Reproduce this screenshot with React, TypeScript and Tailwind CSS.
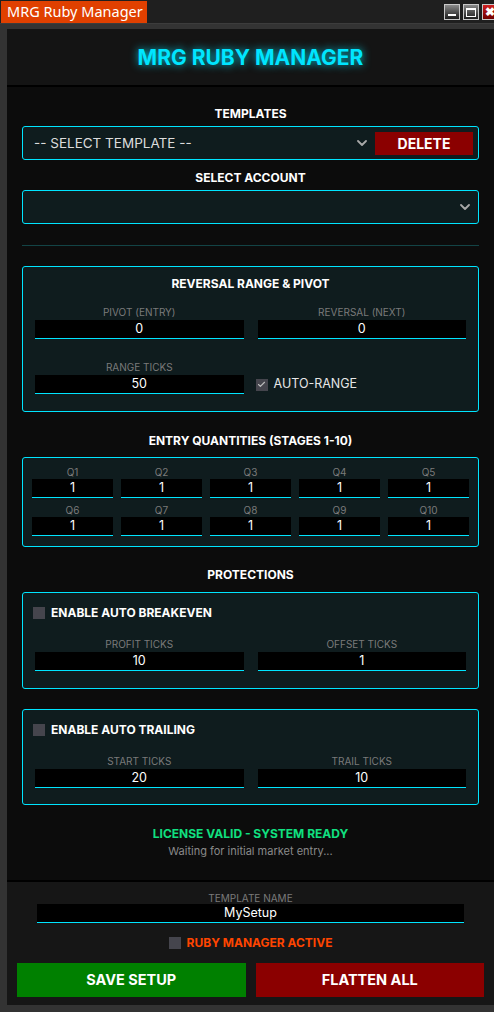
import { Check } from "lucide-react"

const Chevron = () => (
  <svg width="10" height="6" viewBox="0 0 10 6" className="shrink-0">
    <polyline points="1,1 5,5 9,1" fill="none" stroke="#a8a8a8" strokeWidth="1.8" strokeLinecap="round" strokeLinejoin="round" />
  </svg>
)

const Field = ({ label, value }: { label: string; value: string }) => (
  <div className="flex flex-col">
    <div className="h-[12px] leading-[12px] text-[10px] text-[#7a7a7a] text-center">{label}</div>
    <div className="mt-[2px] h-[19px] bg-black border-b border-[#00e5ff] text-white text-[12.5px] leading-[18px] text-center">{value}</div>
  </div>
)

const QField = ({ label }: { label: string }) => (
  <div className="flex flex-col">
    <div className="h-[12px] leading-[12px] text-[10px] text-[#7a7a7a] text-center">{label}</div>
    <div className="mt-[1px] h-[19px] bg-black border-b border-[#00e5ff] text-white text-[12.5px] leading-[18px] text-center">1</div>
  </div>
)

const Box = ({ checked }: { checked?: boolean }) => (
  <div className="w-[12px] h-[12px] bg-[#45454d] flex items-center justify-center shrink-0">
    {checked && <Check size={9} strokeWidth={3} color="#bdbdbd" />}
  </div>
)

const SectionTitle = ({ children }: { children: string }) => (
  <div className="h-[14px] leading-[15px] text-[12px] font-bold text-white text-center">{children}</div>
)

const Panel = ({ children, className }: { children: React.ReactNode; className?: string }) => (
  <div className={"border border-[#00e5ff] rounded-[3px] bg-[#0f1c1e] " + (className ?? "")}>{children}</div>
)

const App = () => {
  return (
    <div className="w-[494px] h-[1012px] bg-[#202020] overflow-hidden flex flex-col font-['Inter',sans-serif]">
      {/* title bar */}
      <div className="h-[23px] flex items-start pl-[1px] pt-[1px] bg-[#1f1f1f]">
        <div className="h-[22px] w-[146px] bg-[#e04000] text-white text-[14.5px] leading-[21px] pl-[6px] whitespace-nowrap overflow-hidden font-['Noto_Sans',sans-serif]">
          MRG Ruby Manager
        </div>
        <div className="ml-auto mr-[-4px] mt-[3px] flex gap-[3px]">
          <div className="w-[16px] h-[16px] border border-[#c8c8c8] bg-gradient-to-b from-[#8a8a8a] to-[#1e1e1e] flex items-end justify-center pb-[3px]">
            <div className="w-[8px] h-[2px] bg-white" />
          </div>
          <div className="w-[16px] h-[16px] border border-[#c8c8c8] bg-gradient-to-b from-[#8a8a8a] to-[#1e1e1e] flex items-center justify-center">
            <div className="w-[10px] h-[9px] border border-white border-t-2" />
          </div>
          <div className="w-[16px] h-[16px] border border-[#c8c8c8] bg-gradient-to-b from-[#d02020] to-[#700000] flex items-center justify-center text-white text-[12px] font-bold leading-none">
            ✖
          </div>
        </div>
      </div>
      <div className="h-[7px] bg-[#333333] border-t border-[#3c3c3c]" />

      <div className="flex flex-1">
        <div className="w-[7px] bg-[#333333]" />
        <div className="flex-1 flex flex-col">
          {/* header */}
          <div className="h-[56px] bg-[#141414] flex items-center justify-center">
            <div className="text-[21px] font-bold text-[#00e5ff] mt-[1px] [text-shadow:0_0_8px_rgba(0,229,255,0.85)]">
              MRG RUBY MANAGER
            </div>
          </div>
          <div className="h-[2px] bg-black" />

          {/* main */}
          <div className="bg-[#0c0c0c] px-[15px] pt-[19px] pb-[22px] flex flex-col">
            <SectionTitle>TEMPLATES</SectionTitle>
            <div className="mt-[6px] h-[34px] border border-[#00e5ff] rounded-[3px] bg-[#0f1c1e] flex items-center pl-[11px]">
              <div className="flex-1 text-[13.5px] text-[#dcdcdc]">-- SELECT TEMPLATE --</div>
              <Chevron />
              <div className="ml-[8px] mr-[5px] w-[98px] h-[23px] bg-[#8b0000] text-white text-[14px] font-bold flex items-center justify-center">
                DELETE
              </div>
            </div>
            <div className="mt-[10px]">
              <SectionTitle>SELECT ACCOUNT</SectionTitle>
            </div>
            <div className="mt-[6px] h-[34px] border border-[#00e5ff] rounded-[3px] bg-[#0f1c1e] flex items-center justify-end pr-[8px]">
              <Chevron />
            </div>
            <div className="mt-[21px] h-px bg-[#134446]" />

            <Panel className="mt-[20px] px-[12px] pt-[9px] pb-[17px]">
              <SectionTitle>REVERSAL RANGE &amp; PIVOT</SectionTitle>
              <div className="mt-[16px] grid grid-cols-2 gap-x-[14px]">
                <Field label="PIVOT (ENTRY)" value="0" />
                <Field label="REVERSAL (NEXT)" value="0" />
              </div>
              <div className="mt-[22px] grid grid-cols-2 gap-x-[14px] items-end">
                <Field label="RANGE TICKS" value="50" />
                <div className="h-[19px] flex items-center gap-[6px] -ml-[2px]">
                  <Box checked />
                  <span className="text-[12.5px] text-[#e6e6e6]">AUTO-RANGE</span>
                </div>
              </div>
            </Panel>

            <div className="mt-[21px]">
              <SectionTitle>ENTRY QUANTITIES (STAGES 1-10)</SectionTitle>
            </div>
            <Panel className="mt-[10px] px-[9px] pt-[8px] pb-[10px]">
              <div className="grid grid-cols-5 gap-x-[8px] gap-y-[6px]">
                {["Q1", "Q2", "Q3", "Q4", "Q5", "Q6", "Q7", "Q8", "Q9", "Q10"].map((q) => (
                  <QField key={q} label={q} />
                ))}
              </div>
            </Panel>

            <div className="mt-[20px]">
              <SectionTitle>PROTECTIONS</SectionTitle>
            </div>
            <Panel className="mt-[11px] px-[12px] pt-[13px] pb-[17px]">
              <div className="h-[14px] flex items-center gap-[6px] -ml-[2px]">
                <Box />
                <span className="text-[12px] font-bold text-white">ENABLE AUTO BREAKEVEN</span>
              </div>
              <div className="mt-[18px] grid grid-cols-2 gap-x-[14px]">
                <Field label="PROFIT TICKS" value="10" />
                <Field label="OFFSET TICKS" value="1" />
              </div>
            </Panel>

            <Panel className="mt-[20px] px-[12px] pt-[13px] pb-[16px]">
              <div className="h-[14px] flex items-center gap-[6px] -ml-[2px]">
                <Box />
                <span className="text-[12px] font-bold text-white">ENABLE AUTO TRAILING</span>
              </div>
              <div className="mt-[18px] grid grid-cols-2 gap-x-[14px]">
                <Field label="START TICKS" value="20" />
                <Field label="TRAIL TICKS" value="10" />
              </div>
            </Panel>

            <div className="mt-[21px] h-[14px] leading-[15px] text-center text-[12px] font-bold text-[#10e080]">
              LICENSE VALID - SYSTEM READY
            </div>
            <div className="mt-[4px] h-[14px] leading-[15px] text-center text-[11px] text-[#8a8a8a]">
              Waiting for initial market entry...
            </div>
          </div>
          <div className="h-[2px] bg-black" />

          {/* footer */}
          <div className="flex-1 bg-[#161616] pt-[10px] pb-[8px] flex flex-col">
            <div className="px-[30px]">
              <div className="h-[12px] leading-[12px] text-[10px] text-[#7a7a7a] text-center">TEMPLATE NAME</div>
              <div className="h-[19px] bg-black border-b border-[#00e5ff] text-white text-[12.5px] leading-[18px] text-center">MySetup</div>
            </div>
            <div className="mt-[13px] h-[14px] flex items-center justify-center gap-[6px]">
              <Box />
              <span className="text-[12px] font-bold text-[#ff4500]">RUBY MANAGER ACTIVE</span>
            </div>
            <div className="mt-[13px] px-[10px] grid grid-cols-2 gap-x-[10px]">
              <div className="h-[34px] bg-[#008000] text-white text-[14.5px] font-bold flex items-center justify-center">SAVE SETUP</div>
              <div className="h-[34px] bg-[#8b0000] text-white text-[14.5px] font-bold flex items-center justify-center">FLATTEN ALL</div>
            </div>
          </div>
        </div>
      </div>
      <div className="h-[8px] bg-[#333333]" />
    </div>
  )
}

export default App
